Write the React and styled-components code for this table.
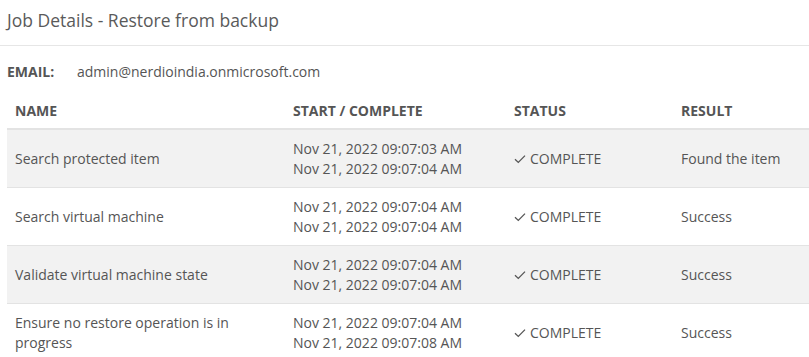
import React from 'react';
import styled, { createGlobalStyle } from 'styled-components';

const GlobalStyle = createGlobalStyle`
  body {
    margin: 0;
    background: #ffffff;
    font-family: "Open Sans", "Liberation Sans", sans-serif;
    color: #555555;
  }
`;

const Page = styled.div`
  width: 809px;
  height: 357px;
  overflow: hidden;
  background: #fff;
`;

const Header = styled.div`
  height: 46px;
  border-bottom: 1px solid #e6e6e6;
  display: flex;
  align-items: center;
  padding-left: 7px;
  box-sizing: border-box;
`;

const Title = styled.h1`
  margin: 0 0 6px 0;
  font-size: 17.5px;
  font-weight: 400;
  color: #5a5a5a;
`;

const Body = styled.div`
  padding: 0 0 0 7px;
`;

const EmailRow = styled.div`
  display: flex;
  align-items: center;
  height: 50px;
  padding-top: 1px;
  font-size: 14px;
  box-sizing: border-box;
`;

const EmailLabel = styled.span`
  font-weight: 700;
  font-size: 14px;
  color: #555;
  width: 70px;
`;

const EmailValue = styled.span`
  color: #555;
`;

const Table = styled.table`
  width: 802px;
  border-collapse: collapse;
  table-layout: fixed;
  font-size: 14px;
`;

const Col = styled.col`
  width: ${p => p.$w}px;
`;

const Th = styled.th`
  text-align: left;
  font-weight: 700;
  font-size: 14px;
  color: #555;
  padding: 0 8px 4px;
  height: 28px;
  border-bottom: 2px solid #e3e3e3;
`;

const Tr = styled.tr`
  background: ${p => (p.$striped ? '#f2f2f2' : '#ffffff')};
  border-bottom: 1px solid #e3e3e3;
`;

const Td = styled.td`
  padding: 0 8px;
  height: 57px;
  color: #555;
  line-height: 20px;
  vertical-align: middle;
`;

const Status = styled.span`
  display: inline-flex;
  align-items: center;
  gap: 4px;
`;

const Check = () => (
  <svg width="12" height="10" viewBox="0 0 12 10" fill="none">
    <path d="M1 5.2 L4.3 8.4 L11 1.6" stroke="#555" strokeWidth="1.3" />
  </svg>
);

const rows = [
  { name: 'Search protected item', start: 'Nov 21, 2022 09:07:03 AM', end: 'Nov 21, 2022 09:07:04 AM', result: 'Found the item' },
  { name: 'Search virtual machine', start: 'Nov 21, 2022 09:07:04 AM', end: 'Nov 21, 2022 09:07:04 AM', result: 'Success' },
  { name: 'Validate virtual machine state', start: 'Nov 21, 2022 09:07:04 AM', end: 'Nov 21, 2022 09:07:04 AM', result: 'Success' },
  { name: 'Ensure no restore operation is in progress', start: 'Nov 21, 2022 09:07:04 AM', end: 'Nov 21, 2022 09:07:08 AM', result: 'Success' },
];

export default function App() {
  return (
    <>
      <GlobalStyle />
      <Page>
        <Header>
          <Title>Job Details - Restore from backup</Title>
        </Header>
        <Body>
          <EmailRow>
            <EmailLabel>EMAIL:</EmailLabel>
            <EmailValue>admin@nerdioindia.onmicrosoft.com</EmailValue>
          </EmailRow>
          <Table>
            <colgroup>
              <Col $w={278} />
              <Col $w={221} />
              <Col $w={167} />
              <Col $w={136} />
            </colgroup>
            <thead>
              <tr>
                <Th>NAME</Th>
                <Th>START / COMPLETE</Th>
                <Th>STATUS</Th>
                <Th>RESULT</Th>
              </tr>
            </thead>
            <tbody>
              {rows.map((r, i) => (
                <Tr key={i} $striped={i % 2 === 0}>
                  <Td>{r.name}</Td>
                  <Td>{r.start}<br />{r.end}</Td>
                  <Td>
                    <Status><Check />COMPLETE</Status>
                  </Td>
                  <Td>{r.result}</Td>
                </Tr>
              ))}
            </tbody>
          </Table>
        </Body>
      </Page>
    </>
  );
}
